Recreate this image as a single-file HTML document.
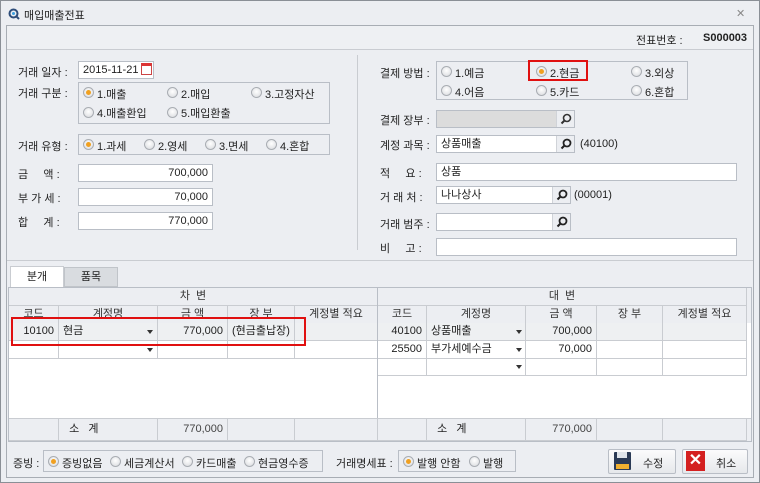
<!DOCTYPE html>
<html><head><meta charset="utf-8"><style>
*{box-sizing:border-box;margin:0;padding:0}
body{width:760px;height:483px;background:#eceef2;font-family:"Liberation Sans","Noto Sans CJK KR",sans-serif;font-size:11px;color:#222;position:relative;overflow:hidden}
.a{position:absolute;white-space:nowrap}
.in{position:absolute;background:#fff;border:1px solid #b9bec6;height:18px;line-height:16px;padding:0 4px;font-size:11px}
.r{text-align:right}
.box{position:absolute;border:1px solid #b9bec6;background:#eceef2}
.rd{position:absolute;width:11px;height:11px;border-radius:50%;border:1px solid #a9adb3;background:radial-gradient(circle at 50% 40%,#fff,#d6d8dc)}
.rd.on::after{content:"";position:absolute;left:2px;top:2px;width:5px;height:5px;border-radius:50%;background:#f0a020}
.s{position:absolute;width:18px;height:16px;background:#eceef2;border-left:1px solid #d0d3d8}
.s svg{position:absolute;left:3px;top:2px}
.g{position:absolute;border-right:1px solid #c9ccd1;border-bottom:1px solid #c9ccd1;height:18px;line-height:17px;padding:0 4px}
.h{text-align:center;background:#eceef2;color:#333}
.arr{position:absolute;width:0;height:0;border-left:3px solid transparent;border-right:3px solid transparent;border-top:4px solid #333}
</style></head><body>
<div class="a" style="left:0;top:0;width:760px;height:483px;border:1px solid #8a8f96"></div>
<div class="a" style="left:1px;top:1px;width:758px;height:24px;background:#eceef2"></div>
<svg class="a" style="left:8px;top:8px" width="12" height="12"><circle cx="5.5" cy="5.5" r="4" fill="none" stroke="#2e4d7a" stroke-width="2"/><circle cx="5.5" cy="5.5" r="1.5" fill="#3a9ee0"/><path d="M8 8l3 3" stroke="#2e4d7a" stroke-width="2"/></svg>
<div class="a" style="left:24px;top:7px;font-size:11px">매입매출전표</div>
<div class="a" style="left:736px;top:7px;color:#888;font-size:11px">✕</div>
<div class="a" style="left:6px;top:25px;width:748px;height:453px;border:1px solid #a8adb4;background:#eceef2"></div>
<div class="a" style="left:7px;top:26px;width:746px;height:24px;background:#eef0f3;border-bottom:1px solid #c9ccd1"></div>
<div class="a" style="left:636px;top:32px">전표번호 :</div>
<div class="a" style="left:703px;top:32px;font-weight:bold">S000003</div>
<div class="a" style="left:357px;top:55px;width:1px;height:195px;background:#c9ccd1"></div>

<div class="a" style="left:18px;top:64px">거래 일자 :</div>
<div class="in" style="left:78px;top:61px;width:76px">2015-11-21</div>
<div class="a" style="left:141px;top:63px;width:11px;height:12px;background:#fff;border:1px solid #c44;border-top:3px solid #d33"></div>
<div class="a" style="left:18px;top:85px">거래 구분 :</div>
<div class="box" style="left:78px;top:82px;width:252px;height:42px"></div>
<div class="rd on" style="left:83px;top:87px"></div><div class="a" style="left:97px;top:86px">1.매출</div>
<div class="rd" style="left:167px;top:87px"></div><div class="a" style="left:181px;top:86px">2.매입</div>
<div class="rd" style="left:251px;top:87px"></div><div class="a" style="left:265px;top:86px">3.고정자산</div>
<div class="rd" style="left:83px;top:107px"></div><div class="a" style="left:97px;top:105px">4.매출환입</div>
<div class="rd" style="left:167px;top:107px"></div><div class="a" style="left:181px;top:105px">5.매입환출</div>
<div class="a" style="left:18px;top:138px">거래 유형 :</div>
<div class="box" style="left:78px;top:134px;width:252px;height:21px"></div>
<div class="rd on" style="left:83px;top:139px"></div><div class="a" style="left:97px;top:138px">1.과세</div>
<div class="rd" style="left:144px;top:139px"></div><div class="a" style="left:158px;top:138px">2.영세</div>
<div class="rd" style="left:205px;top:139px"></div><div class="a" style="left:219px;top:138px">3.면세</div>
<div class="rd" style="left:266px;top:139px"></div><div class="a" style="left:280px;top:138px">4.혼합</div>
<div class="a" style="left:18px;top:166px">금 &nbsp; &nbsp; 액 :</div>
<div class="in r" style="left:78px;top:164px;width:135px">700,000</div>
<div class="a" style="left:18px;top:190px">부 가 세 :</div>
<div class="in r" style="left:78px;top:188px;width:135px">70,000</div>
<div class="a" style="left:18px;top:214px">합 &nbsp; &nbsp; 계 :</div>
<div class="in r" style="left:78px;top:212px;width:135px">770,000</div>

<div class="a" style="left:380px;top:65px">결제 방법 :</div>
<div class="box" style="left:436px;top:61px;width:252px;height:39px"></div>
<div class="rd" style="left:441px;top:66px"></div><div class="a" style="left:455px;top:65px">1.예금</div>
<div class="rd on" style="left:536px;top:66px"></div><div class="a" style="left:550px;top:65px">2.현금</div>
<div class="rd" style="left:631px;top:66px"></div><div class="a" style="left:645px;top:65px">3.외상</div>
<div class="rd" style="left:441px;top:85px"></div><div class="a" style="left:455px;top:84px">4.어음</div>
<div class="rd" style="left:536px;top:85px"></div><div class="a" style="left:550px;top:84px">5.카드</div>
<div class="rd" style="left:631px;top:85px"></div><div class="a" style="left:645px;top:84px">6.혼합</div>
<div class="a" style="left:528px;top:60px;width:60px;height:21px;border:2px solid #e01010"></div>

<div class="a" style="left:380px;top:112px">결제 장부 :</div>
<div class="in" style="left:436px;top:110px;width:139px;background:#dcdcdc"></div>
<div class="s" style="left:556px;top:111px"><svg width="12" height="12"><circle cx="7" cy="5" r="3.5" fill="none" stroke="#333" stroke-width="1.6"/><path d="M4.5 7.5L1.5 10.5" stroke="#333" stroke-width="2"/></svg></div>
<div class="a" style="left:380px;top:137px">계정 과목 :</div>
<div class="in" style="left:436px;top:135px;width:139px">상품매출</div>
<div class="s" style="left:556px;top:136px"><svg width="12" height="12"><circle cx="7" cy="5" r="3.5" fill="none" stroke="#222" stroke-width="1.8"/><path d="M4.5 7.5L1.5 10.5" stroke="#222" stroke-width="2"/></svg></div>
<div class="a" style="left:580px;top:138px">(40100)</div>
<div class="a" style="left:380px;top:165px">적 &nbsp; &nbsp; 요 :</div>
<div class="in" style="left:436px;top:163px;width:301px">상품</div>
<div class="a" style="left:380px;top:189px">거 래 처 :</div>
<div class="in" style="left:436px;top:186px;width:135px">나나상사</div>
<div class="s" style="left:552px;top:187px"><svg width="12" height="12"><circle cx="7" cy="5" r="3.5" fill="none" stroke="#222" stroke-width="1.8"/><path d="M4.5 7.5L1.5 10.5" stroke="#222" stroke-width="2"/></svg></div>
<div class="a" style="left:574px;top:189px">(00001)</div>
<div class="a" style="left:380px;top:216px">거래 범주 :</div>
<div class="in" style="left:436px;top:213px;width:135px"></div>
<div class="s" style="left:552px;top:214px"><svg width="12" height="12"><circle cx="7" cy="5" r="3.5" fill="none" stroke="#222" stroke-width="1.8"/><path d="M4.5 7.5L1.5 10.5" stroke="#222" stroke-width="2"/></svg></div>
<div class="a" style="left:380px;top:240px">비 &nbsp; &nbsp; 고 :</div>
<div class="in" style="left:436px;top:238px;width:301px"></div>

<div class="a" style="left:7px;top:260px;width:746px;height:1px;background:#c9ccd1"></div>
<div class="a" style="left:10px;top:266px;width:54px;height:22px;background:#fff;border:1px solid #c9ccd1;border-bottom:none;text-align:center;line-height:20px">분개</div>
<div class="a" style="left:64px;top:267px;width:54px;height:20px;background:#d9dce0;border:1px solid #c0c4c9;text-align:center;line-height:18px">품목</div>

<div class="a" style="left:8px;top:287px;width:744px;height:155px;background:#fff;border:1px solid #b9bec6"></div>
<div class="a" style="left:9px;top:288px;width:742px;height:35px;background:#eceef2"></div>
<div class="g h" style="left:9px;top:288px;width:369px">차 &nbsp;변</div>
<div class="g h" style="left:378px;top:288px;width:369px">대 &nbsp;변</div>
<div class="g h" style="left:9px;top:306px;width:50px">코드</div>
<div class="g h" style="left:59px;top:306px;width:99px">계정명</div>
<div class="g h" style="left:158px;top:306px;width:70px">금 액</div>
<div class="g h" style="left:228px;top:306px;width:67px">장 부</div>
<div class="g h" style="left:295px;top:306px;width:83px">계정별 적요</div>
<div class="g h" style="left:378px;top:306px;width:49px">코드</div>
<div class="g h" style="left:427px;top:306px;width:99px">계정명</div>
<div class="g h" style="left:526px;top:306px;width:71px">금 액</div>
<div class="g h" style="left:597px;top:306px;width:66px">장 부</div>
<div class="g h" style="left:663px;top:306px;width:84px">계정별 적요</div>
<div class="a" style="left:9px;top:323px;width:738px;height:18px;background:#eef0f2"></div>
<div class="g" style="left:9px;top:323px;width:50px;text-align:right">10100</div>
<div class="g" style="left:59px;top:323px;width:99px">현금</div><div class="arr" style="left:147px;top:330px"></div>
<div class="g r" style="left:158px;top:323px;width:70px">770,000</div>
<div class="g" style="left:228px;top:323px;width:67px">(현금출납장)</div>
<div class="g" style="left:295px;top:323px;width:83px"></div>
<div class="g r" style="left:378px;top:323px;width:49px">40100</div>
<div class="g" style="left:427px;top:323px;width:99px">상품매출</div><div class="arr" style="left:516px;top:330px"></div>
<div class="g r" style="left:526px;top:323px;width:71px">700,000</div>
<div class="g" style="left:597px;top:323px;width:66px"></div>
<div class="g" style="left:663px;top:323px;width:84px"></div>
<div class="g" style="left:9px;top:341px;width:50px"></div>
<div class="g" style="left:59px;top:341px;width:99px"></div><div class="arr" style="left:147px;top:348px"></div>
<div class="g" style="left:158px;top:341px;width:70px"></div>
<div class="g" style="left:228px;top:341px;width:67px"></div>
<div class="g" style="left:295px;top:341px;width:83px"></div>
<div class="g r" style="left:378px;top:341px;width:49px">25500</div>
<div class="g" style="left:427px;top:341px;width:99px">부가세예수금</div><div class="arr" style="left:516px;top:348px"></div>
<div class="g r" style="left:526px;top:341px;width:71px">70,000</div>
<div class="g" style="left:597px;top:341px;width:66px"></div>
<div class="g" style="left:663px;top:341px;width:84px"></div>
<div class="g" style="left:378px;top:358px;width:49px"></div>
<div class="g" style="left:427px;top:358px;width:99px"></div><div class="arr" style="left:516px;top:365px"></div>
<div class="g" style="left:526px;top:358px;width:71px"></div>
<div class="g" style="left:597px;top:358px;width:66px"></div>
<div class="g" style="left:663px;top:358px;width:84px"></div>
<div class="a" style="left:377px;top:288px;width:1px;height:153px;background:#b9bec6"></div>
<div class="a" style="left:9px;top:418px;width:742px;height:23px;background:#eceef2;border-top:1px solid #c9ccd1"></div>
<div class="g" style="left:9px;top:419px;width:50px;height:22px"></div>
<div class="g" style="left:59px;top:419px;width:99px;height:22px;line-height:20px">&nbsp; 소 &nbsp; 계</div>
<div class="g r" style="left:158px;top:419px;width:70px;height:22px;line-height:20px;color:#444">770,000</div>
<div class="g" style="left:228px;top:419px;width:67px;height:22px"></div>
<div class="g" style="left:295px;top:419px;width:83px;height:22px"></div>
<div class="g" style="left:378px;top:419px;width:49px;height:22px"></div>
<div class="g" style="left:427px;top:419px;width:99px;height:22px;line-height:20px">&nbsp; 소 &nbsp; 계</div>
<div class="g r" style="left:526px;top:419px;width:71px;height:22px;line-height:20px;color:#444">770,000</div>
<div class="g" style="left:597px;top:419px;width:66px;height:22px"></div>
<div class="g" style="left:663px;top:419px;width:84px;height:22px"></div>
<div class="a" style="left:11px;top:317px;width:295px;height:29px;border:2px solid #e01010"></div>

<div class="a" style="left:13px;top:455px">증빙 :</div>
<div class="box" style="left:43px;top:450px;width:280px;height:22px"></div>
<div class="rd on" style="left:48px;top:456px"></div><div class="a" style="left:62px;top:455px">증빙없음</div>
<div class="rd" style="left:110px;top:456px"></div><div class="a" style="left:124px;top:455px">세금계산서</div>
<div class="rd" style="left:182px;top:456px"></div><div class="a" style="left:196px;top:455px">카드매출</div>
<div class="rd" style="left:244px;top:456px"></div><div class="a" style="left:258px;top:455px">현금영수증</div>
<div class="a" style="left:336px;top:455px">거래명세표 :</div>
<div class="box" style="left:398px;top:450px;width:118px;height:22px"></div>
<div class="rd on" style="left:403px;top:456px"></div><div class="a" style="left:417px;top:455px">발행 안함</div>
<div class="rd" style="left:469px;top:456px"></div><div class="a" style="left:483px;top:455px">발행</div>
<div class="a" style="left:608px;top:449px;width:68px;height:25px;border:1px solid #b9bec6;border-radius:2px;background:linear-gradient(#fbfbfc,#e6e8eb)"></div>
<div class="a" style="left:614px;top:452px;width:17px;height:18px;background:#2a3a55;border-radius:1px"></div>
<div class="a" style="left:617px;top:452px;width:10px;height:6px;background:#dfe4ea"></div>
<div class="a" style="left:616px;top:464px;width:13px;height:5px;background:#f0b030"></div>
<div class="a" style="left:643px;top:455px">수정</div>
<div class="a" style="left:682px;top:449px;width:66px;height:25px;border:1px solid #b9bec6;border-radius:2px;background:linear-gradient(#fbfbfc,#e6e8eb)"></div>
<div class="a" style="left:686px;top:451px;width:19px;height:20px;background:#d42020;color:#fff;font-weight:bold;font-size:16px;text-align:center;line-height:20px">✕</div>
<div class="a" style="left:716px;top:455px">취소</div>
</body></html>
